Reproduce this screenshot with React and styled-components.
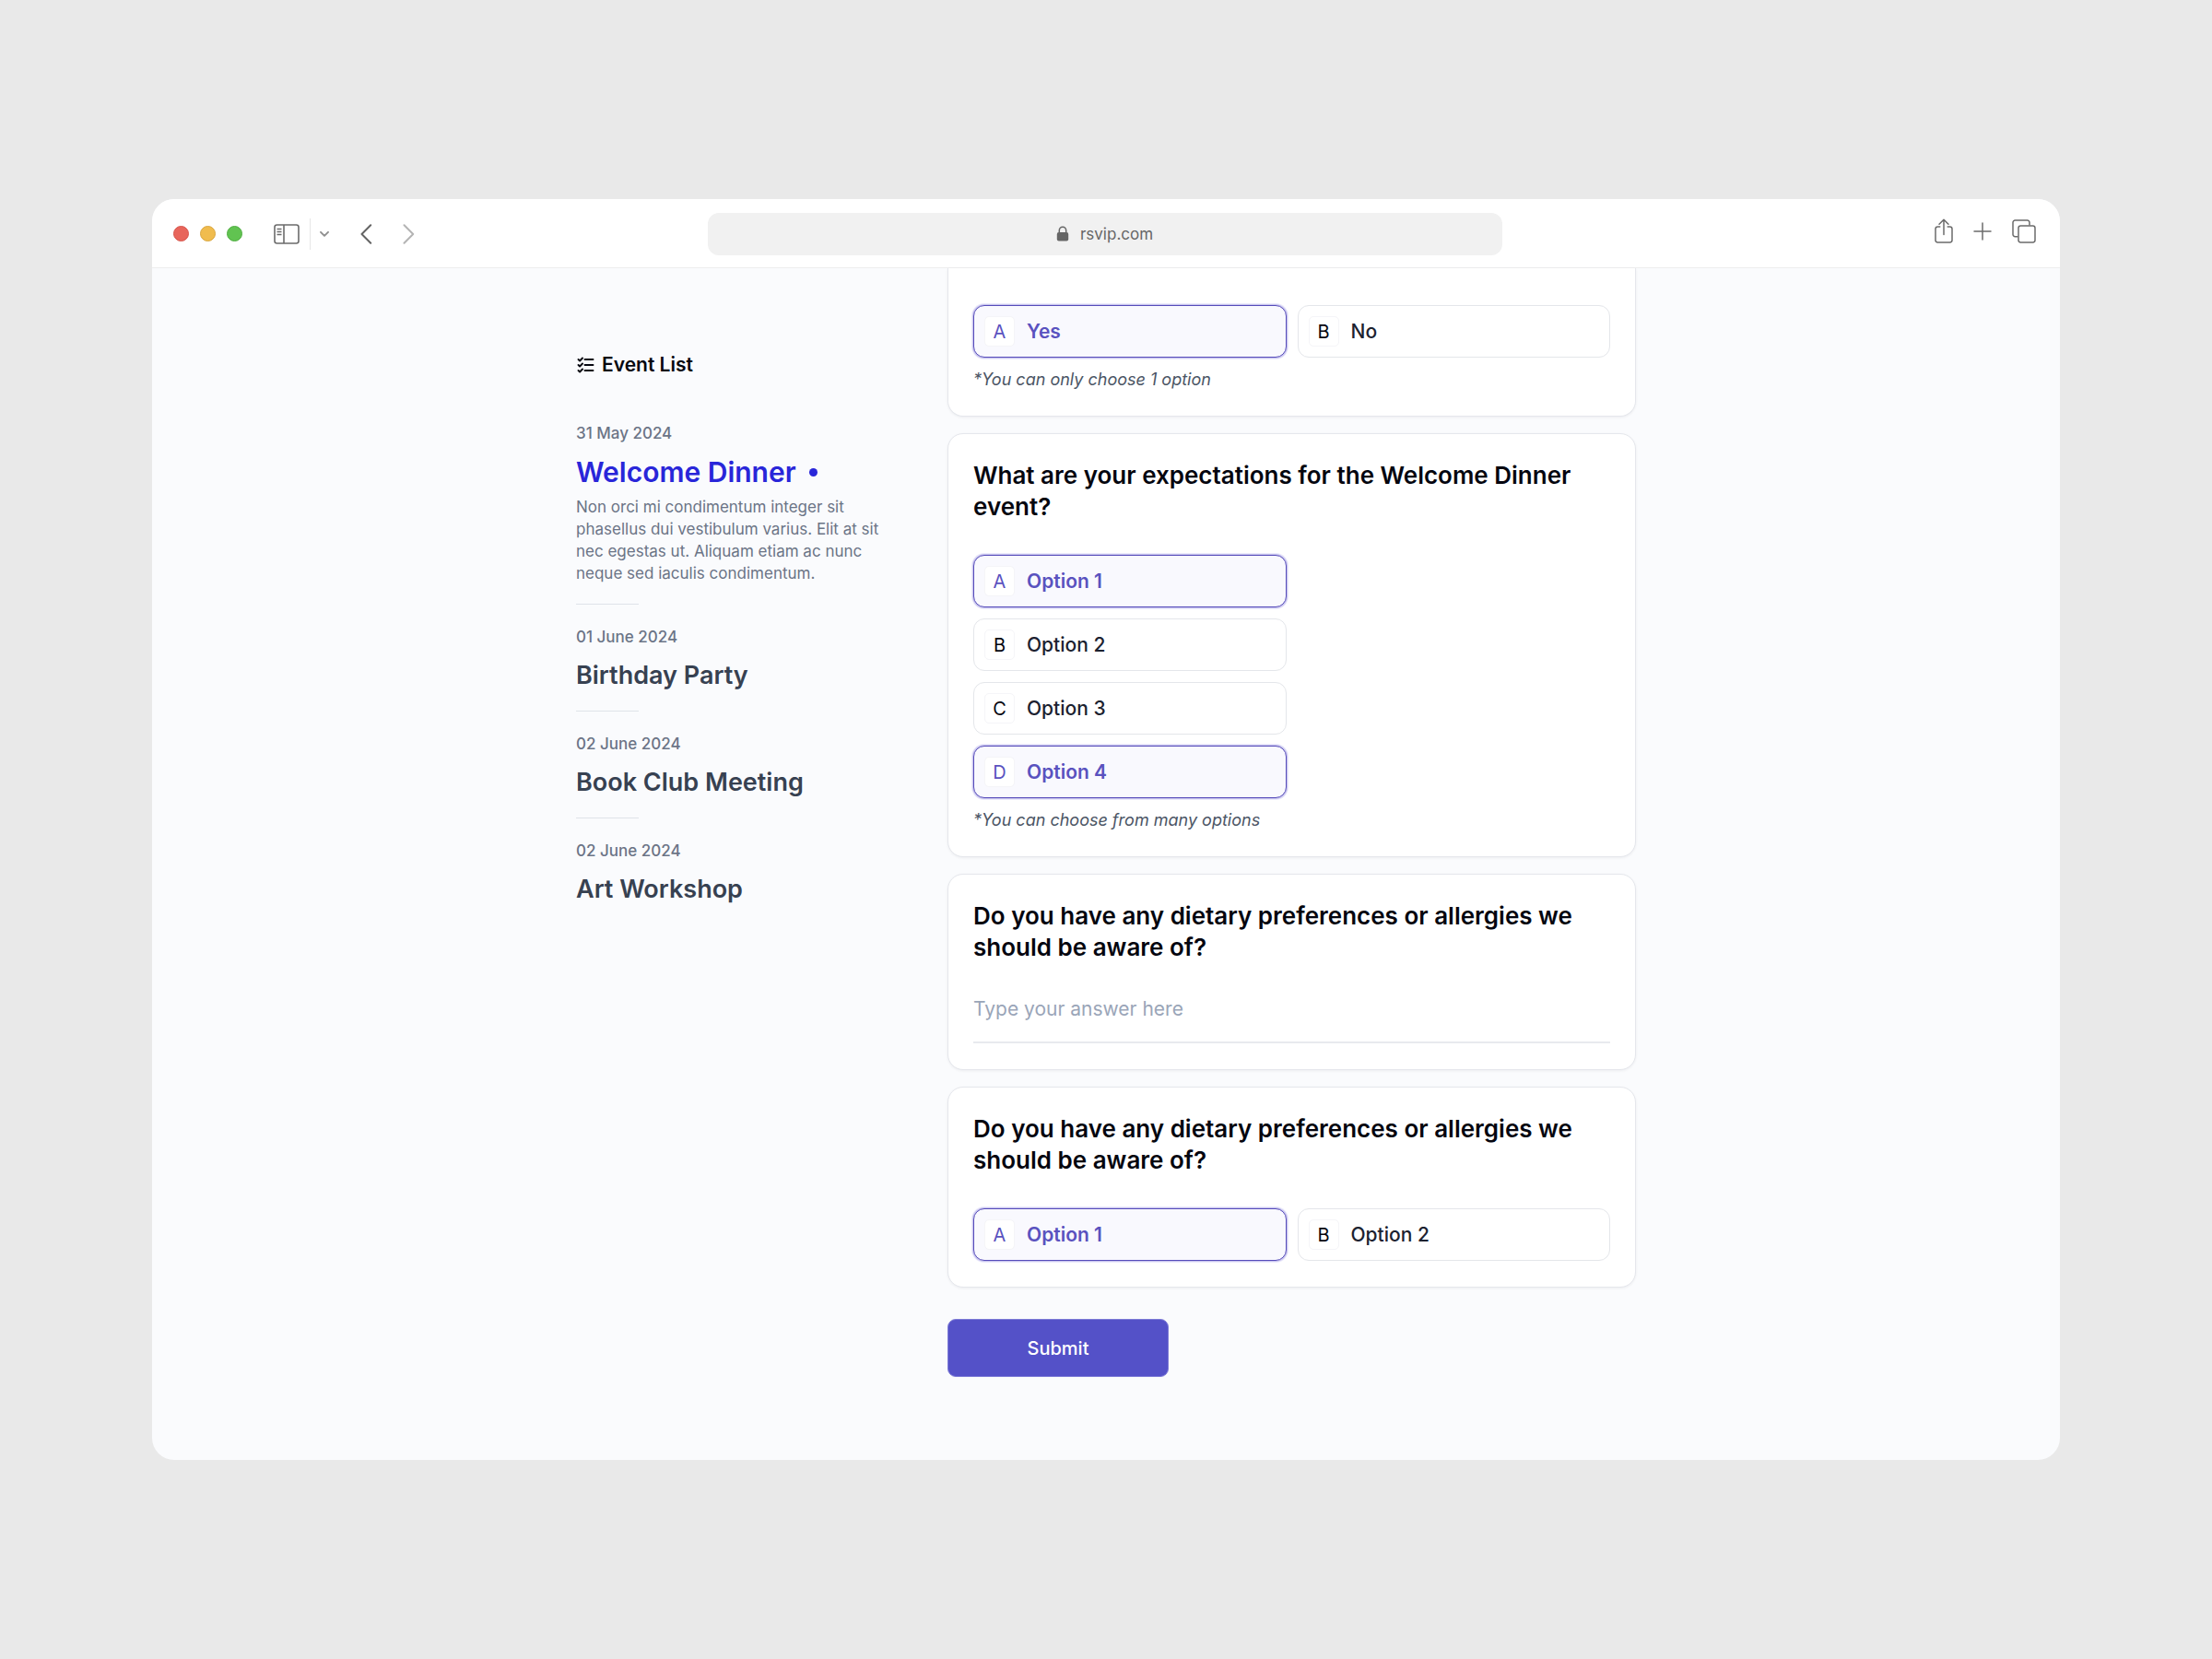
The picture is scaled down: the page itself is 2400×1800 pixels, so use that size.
import React, { useState } from 'react'
import { styled, createGlobalStyle, css } from 'styled-components'

const EVENTS = [
  {
    date: '31 May 2024',
    title: 'Welcome Dinner',
    text: 'Non orci mi condimentum integer sit phasellus dui vestibulum varius. Elit at sit nec egestas ut. Aliquam etiam ac nunc neque sed iaculis condimentum.',
    active: true,
  },
  { date: '01 June 2024', title: 'Birthday Party' },
  { date: '02 June 2024', title: 'Book Club Meeting' },
  { date: '02 June 2024', title: 'Art Workshop' },
]

function SidebarIcon() {
  return (
    <svg width="28" height="22" viewBox="0 0 28 22" fill="none" stroke="#6b6b6b" strokeWidth="1.6">
      <rect x="1" y="1" width="26" height="20" rx="2.5" />
      <path d="M11 1v20M3.5 5.5h5M3.5 8.5h5M3.5 11.5h5" />
    </svg>
  )
}

function ChevronDown() {
  return (
    <svg width="10" height="8" viewBox="0 0 10 8" fill="none" stroke="#8f8f8f" strokeWidth="1.9" strokeLinecap="round" strokeLinejoin="round">
      <path d="M1 1.8l4 4 4-4" />
    </svg>
  )
}

function Chevron({ next }) {
  return (
    <svg width="13" height="22" viewBox="0 0 13 22" fill="none" stroke={next ? '#b4b4b4' : '#636363'} strokeWidth="2" strokeLinecap="round" strokeLinejoin="round">
      <path d={next ? 'M1.5 1.3L11.2 11l-9.7 9.7' : 'M11.2 1.3L1.5 11l9.7 9.7'} />
    </svg>
  )
}

function LockIcon() {
  return (
    <svg width="14" height="17" viewBox="0 0 14 17" fill="none">
      <rect x="0.8" y="7" width="12.4" height="9.6" rx="2" fill="#666" />
      <path d="M3.3 7.4V5a3.7 3.7 0 0 1 7.4 0v2.4" stroke="#666" strokeWidth="1.5" />
    </svg>
  )
}

function ShareIcon() {
  return (
    <svg width="20" height="28" viewBox="0 0 20 28" fill="none" stroke="#6b6b6b" strokeWidth="1.5" strokeLinecap="round" strokeLinejoin="round">
      <path d="M5.8 9H3.4A2.4 2.4 0 0 0 1 11.4v12.2A2.4 2.4 0 0 0 3.4 26h13.2a2.4 2.4 0 0 0 2.4-2.4V11.4A2.4 2.4 0 0 0 16.6 9h-2.4" />
      <path d="M10 17.5V1.5M5 6.3l5-5 5 5" />
    </svg>
  )
}

function PlusIcon() {
  return (
    <svg width="20" height="20" viewBox="0 0 20 20" stroke="#6b6b6b" strokeWidth="1.5" strokeLinecap="round">
      <path d="M10 1v18M1 10h18" />
    </svg>
  )
}

function TabsIcon() {
  return (
    <svg width="26" height="26" viewBox="0 0 26 26" fill="none" stroke="#6b6b6b" strokeWidth="1.5" strokeLinejoin="round">
      <path d="M6.5 18.7H3.4A2.4 2.4 0 0 1 1 16.3V3.4A2.4 2.4 0 0 1 3.4 1h13.2A2.4 2.4 0 0 1 19 3.4v3.1" />
      <rect x="7" y="7" width="18" height="18" rx="2.4" />
    </svg>
  )
}

function ListIcon() {
  return (
    <svg width="20" height="18" viewBox="0 0 20 18" fill="none" stroke="#05060f" strokeWidth="1.9" strokeLinecap="round" strokeLinejoin="round">
      <path d="M9.500 3h9M9.500 9h9M9.500 15h9" />
      <path d="M2.500 3l1.600 1.500L7 1.500M2.500 9l1.600 1.500L7 7.500M2.500 15l1.600 1.500L7 13.500" />
    </svg>
  )
}

function Choices({ name, type = 'radio', stacked, options, initial }) {
  const [picked, setPicked] = useState(initial)

  const toggle = (option) => {
    if (type === 'radio') {
      setPicked([option])
    } else {
      setPicked(picked.includes(option) ? picked.filter((o) => o !== option) : [...picked, option])
    }
  }

  return (
    <ChoiceGrid>
      {options.map((option, i) => (
        <Choice key={option} $checked={picked.includes(option)} $stacked={stacked}>
          <ChoiceInput type={type} name={name} checked={picked.includes(option)} onChange={() => toggle(option)} />
          <ChoiceKey $checked={picked.includes(option)}>{'ABCD'[i]}</ChoiceKey>
          {option}
        </Choice>
      ))}
    </ChoiceGrid>
  )
}

function App() {
  return (
    <Page>
      <GlobalStyle />
      <Browser>
        <Toolbar>
          <ToolbarLeft>
            <Lights>
              <Light $color="#e8655b" $edge="#d6564d" />
              <Light $color="#f0bc4e" $edge="#d9a63f" />
              <Light $color="#61c351" $edge="#50ae42" />
            </Lights>
            <IconButton aria-label="Sidebar"><SidebarIcon /></IconButton>
            <TabGroup aria-label="Tab groups"><ChevronDown /></TabGroup>
            <NavButtons>
              <IconButton aria-label="Back"><Chevron /></IconButton>
              <IconButton aria-label="Forward"><Chevron next /></IconButton>
            </NavButtons>
          </ToolbarLeft>
          <Address>
            <LockIcon />
            rsvip.com
          </Address>
          <ToolbarRight>
            <IconButton aria-label="Share"><ShareIcon /></IconButton>
            <IconButton aria-label="New tab"><PlusIcon /></IconButton>
            <IconButton aria-label="Show tabs"><TabsIcon /></IconButton>
          </ToolbarRight>
        </Toolbar>

        <Content>
          <Sidebar>
            <SidebarTitle>
              <ListIcon />
              Event List
            </SidebarTitle>
            {EVENTS.map((event) => (
              <Event key={event.title}>
                <EventDate>{event.date}</EventDate>
                <EventTitle $active={event.active}>
                  {event.title}
                  {event.active && <Dot />}
                </EventTitle>
                {event.text && <EventText>{event.text}</EventText>}
              </Event>
            ))}
          </Sidebar>

          <Form onSubmit={(e) => e.preventDefault()}>
            <Card $cut>
              <Choices name="attend" options={['Yes', 'No']} initial={['Yes']} />
              <Hint>*You can only choose 1 option</Hint>
            </Card>
            <Card>
              <Question>What are your expectations for the Welcome Dinner event?</Question>
              <Choices
                name="expectations"
                type="checkbox"
                stacked
                options={['Option 1', 'Option 2', 'Option 3', 'Option 4']}
                initial={['Option 1', 'Option 4']}
              />
              <Hint>*You can choose from many options</Hint>
            </Card>
            <Card>
              <Question as="label" htmlFor="dietary">
                Do you have any dietary preferences or allergies we should be aware of?
              </Question>
              <Answer id="dietary" type="text" placeholder="Type your answer here" />
            </Card>
            <Card>
              <Question>Do you have any dietary preferences or allergies we should be aware of?</Question>
              <Choices name="allergies" options={['Option 1', 'Option 2']} initial={['Option 1']} />
            </Card>
            <Submit type="submit">Submit</Submit>
          </Form>
        </Content>
      </Browser>
    </Page>
  )
}
export default App

const GlobalStyle = createGlobalStyle`
* {
    box-sizing: border-box;
    margin: 0;
}

body {
    background: #e9e9e9;
    font-family: Inter, "Liberation Sans", sans-serif;
    color: #05060f;
}

svg {
    display: block;
    flex-shrink: 0;
}
`

const Page = styled.div`
min-height: 100vh;
padding: 40px 165px;
display: grid;
align-items: center;
`

const Browser = styled.div`
background: #fafbfd;
border-radius: 24px;
overflow: hidden;
`

const Toolbar = styled.header`
display: grid;
grid-template-columns: 1fr minmax(0, 862px) 1fr;
align-items: center;
height: 75px;
padding: 1px 26px 0 23px;
background: #fff;
border-bottom: 1px solid #ededee;
`

const ToolbarLeft = styled.div`
display: flex;
align-items: center;
`

const ToolbarRight = styled.div`
display: flex;
align-items: center;
justify-content: flex-end;
gap: 22px;
padding-bottom: 6px;
`

const Lights = styled.div`
display: flex;
gap: 12px;
margin-right: 34px;
`

const Light = styled.span`
width: 17px;
height: 17px;
border-radius: 50%;
background: ${({ $color }) => $color};
border: 1px solid ${({ $edge }) => $edge};
`

const IconButton = styled.button`
padding: 0;
border: 0;
background: none;
cursor: pointer;
`

const TabGroup = styled(IconButton)`
height: 34px;
margin-left: 11px;
padding-left: 10px;
border-left: 1px solid #e6e6e6;
`

const NavButtons = styled.div`
display: flex;
gap: 33px;
margin-left: 34px;
`

const Address = styled.div`
display: flex;
align-items: center;
justify-content: center;
gap: 12px;
height: 46px;
border-radius: 12px;
background: #f1f1f1;
color: #666;
font-size: 17px;
`

const Content = styled.main`
display: grid;
grid-template-columns: 345px minmax(0, 1fr);
gap: 58px;
max-width: 1150px;
margin: 0 auto;
padding-bottom: 90px;
`

const Sidebar = styled.aside`
padding-top: 91px;
`

const SidebarTitle = styled.h2`
display: flex;
align-items: center;
gap: 8px;
margin-bottom: 48px;
font-size: 21px;
line-height: 28px;
font-weight: 600;
`

const Event = styled.article`
& + &::before {
    content: "";
    display: block;
    width: 68px;
    height: 1px;
    margin: 21px 0 23px;
    background: #dfe3e9;
}
`

const EventDate = styled.p`
margin-bottom: 12px;
font-size: 17px;
line-height: 24px;
font-weight: 500;
color: #6b7486;
`

const EventTitle = styled.h3`
display: flex;
align-items: center;
gap: 14px;
font-size: 27px;
line-height: 35px;
font-weight: 600;
color: #374151;
${({ $active }) => $active && css`
    font-size: 30px;
    line-height: 36px;
    color: #2926d9;
`}
`

const Dot = styled.span`
width: 9px;
height: 9px;
border-radius: 50%;
background: #2926d9;
`

const EventText = styled.p`
margin-top: 8px;
font-size: 17px;
line-height: 24px;
color: #6b7486;
`

const Form = styled.form`
display: flex;
flex-direction: column;
gap: 18px;
`

const Card = styled.section`
padding: 28px 27px;
background: #fff;
border: 1px solid #e5e7ec;
border-radius: 17px;
box-shadow: 0 1px 3px rgba(16, 24, 40, 0.06);
${({ $cut }) => $cut && css`
    padding-top: 40px;
    border-top: 0;
    border-radius: 0 0 17px 17px;
`}
`

const Question = styled.h2`
display: block;
margin-bottom: 35px;
font-size: 26px;
line-height: 34px;
font-weight: 600;
`

const ChoiceGrid = styled.div`
display: grid;
grid-template-columns: 1fr 1fr;
gap: 12px;
`

const Choice = styled.label`
display: flex;
align-items: center;
gap: 13px;
height: 57px;
padding: 0 11px;
border: 1px solid #e4e6ea;
border-radius: 12px;
font-size: 21px;
font-weight: 500;
color: #1c2230;
cursor: pointer;
${({ $stacked }) => $stacked && css`
    grid-column: 1;
`}
${({ $checked }) => $checked && css`
    border-color: #564cba;
    background: #f9f9fe;
    box-shadow: 0 0 0 1px #c9c5ee, 0 0 0 2px #ebeafb;
    font-weight: 600;
    color: #5a52bf;
`}
`

const ChoiceInput = styled.input`
position: absolute;
opacity: 0;
pointer-events: none;
`

const ChoiceKey = styled.span`
display: flex;
align-items: center;
justify-content: center;
width: 33px;
height: 33px;
border: 1px solid #f5f5f8;
border-radius: 5px;
background: #fff;
font-size: 20px;
font-weight: 400;
color: ${({ $checked }) => ($checked ? '#5a52bf' : '#05060f')};
`

const Hint = styled.p`
margin-top: 12px;
font-size: 18px;
line-height: 23px;
font-style: italic;
color: #4b5565;
`

const Answer = styled.input`
display: block;
width: 100%;
height: 52px;
padding: 0 0 22px;
border: 0;
border-bottom: 2px solid #e8eaee;
background: none;
font: inherit;
font-size: 21px;
color: #1c2230;
outline: none;

&::placeholder {
    color: #9aa5b8;
    opacity: 1;
}
`

const Submit = styled.button`
align-self: flex-start;
width: 240px;
height: 63px;
margin-top: 16px;
border: 1px solid #7d7bd6;
border-radius: 9px;
background: #5451c8;
color: #fff;
font: inherit;
font-size: 20px;
font-weight: 500;
cursor: pointer;
`
